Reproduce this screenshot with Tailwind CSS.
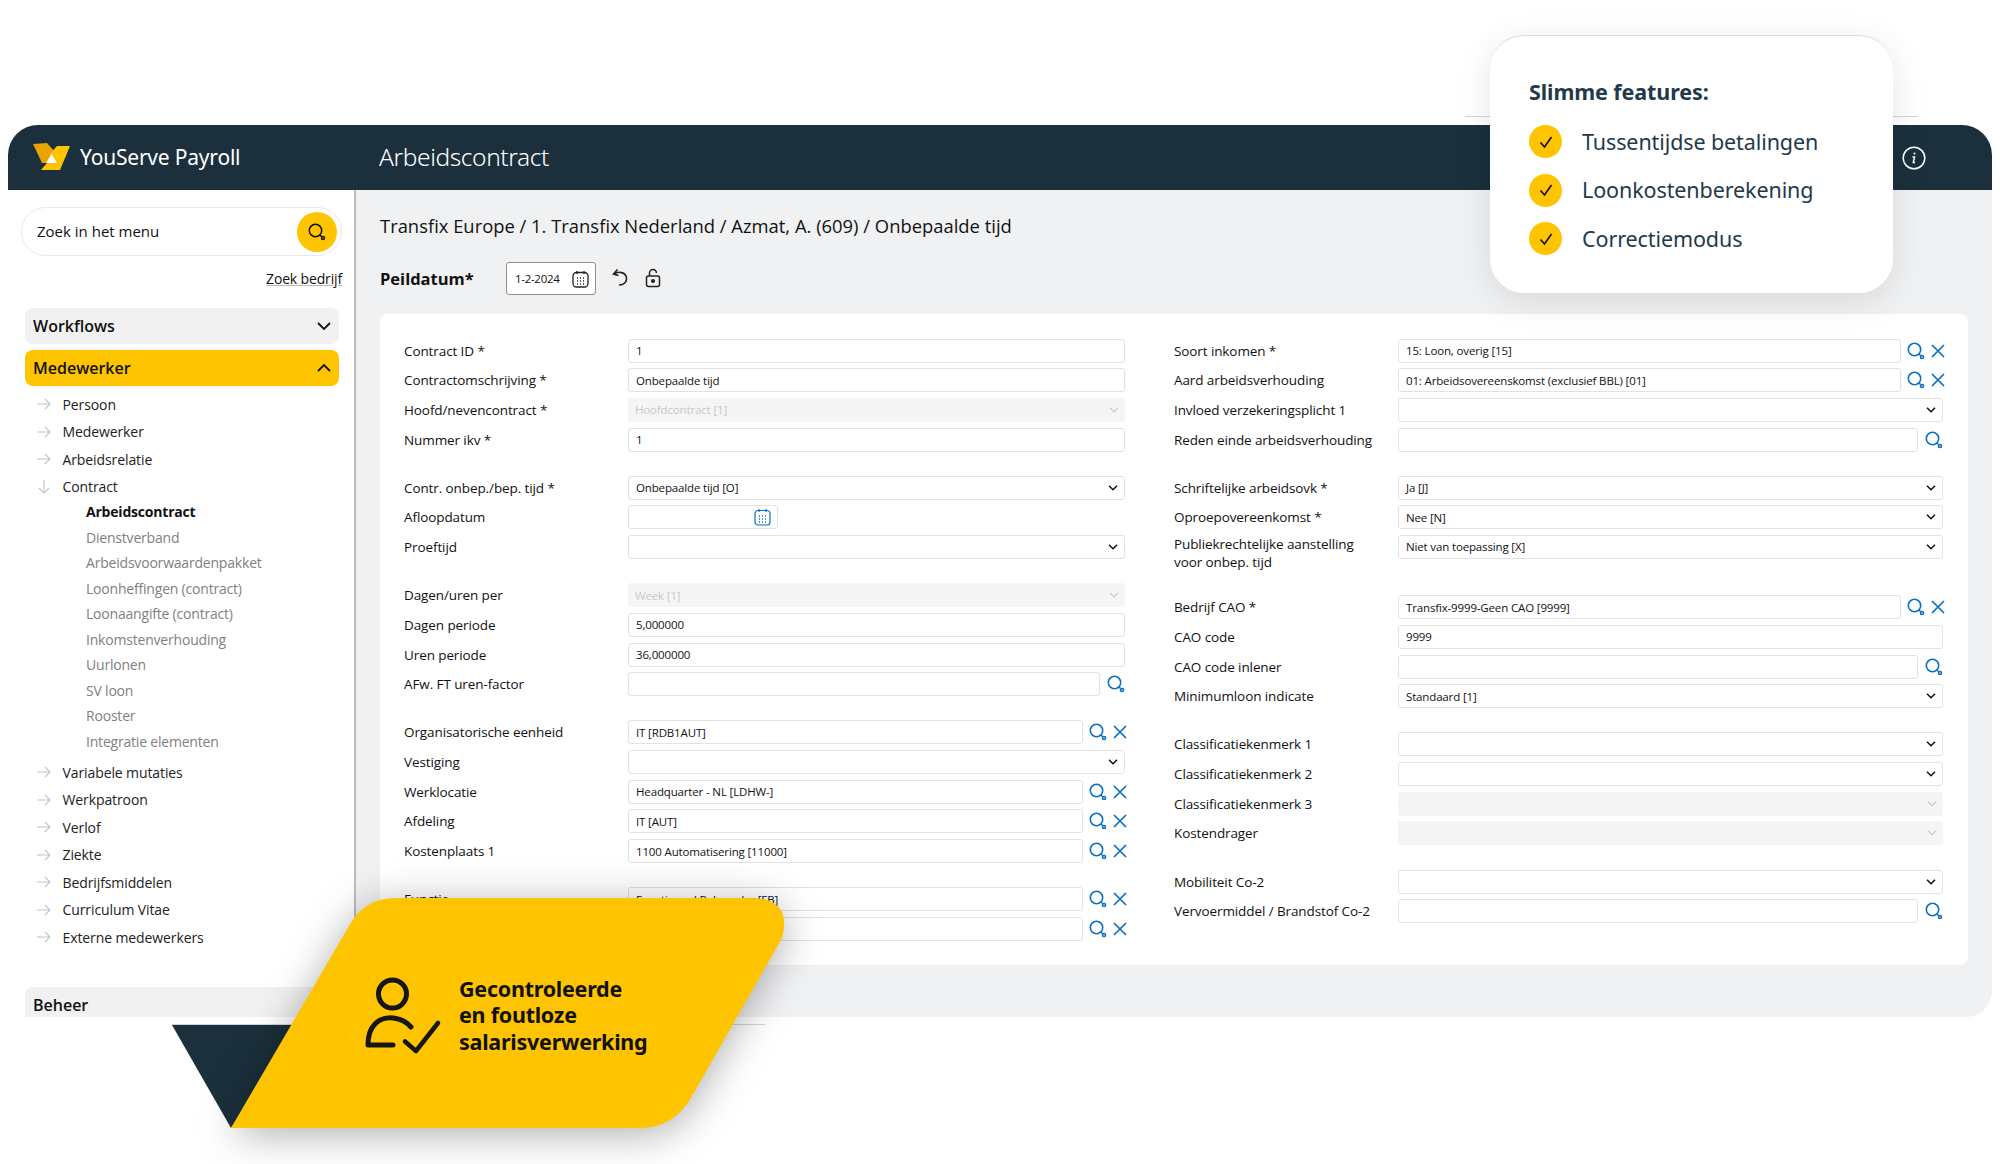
<!DOCTYPE html>
<html lang="en">
<head>
  <meta charset="UTF-8" />
  <title>YouServe Payroll</title>
  <script src="https://cdn.jsdelivr.net/npm/@tailwindcss/browser@4"></script>
</head>
<body class="bg-white font-['Open_Sans',sans-serif] text-[#111]">
<div class="relative w-[2000px] h-[1164px] overflow-hidden bg-white pt-[125px] pl-2">

  <!-- app window -->
  <div class="w-[1984px] h-[892px] rounded-t-[30px] rounded-br-[26px] overflow-hidden flex flex-col">
    <header class="h-[65px] shrink-0 bg-[#1b303c] flex items-center text-white font-['Noto_Sans',sans-serif]">
      <svg class="ml-[25px] w-[38px] h-[30px]" viewBox="0 0 38 30">
        <polygon points="0,1 14,0 22,9 15,20 9,20" fill="#e9a400"/>
        <polygon points="24,3 37,3 27,27 8,27 14,20 22,20 17,11" fill="#fec400"/>
        <polygon points="13,20 18.500,11 24,20" fill="#fff"/>
      </svg>
      <span class="ml-[9px] w-[299px] text-[21px] tracking-[-0.2px] pt-px">YouServe Payroll</span>
      <span class="text-[24.500px] font-light tracking-[-0.4px]">Arbeidscontract</span>
      <svg class="ml-auto mr-[66px] w-6 h-6" viewBox="0 0 24 24" fill="none" stroke="#fff" stroke-width="1.500"><circle cx="12" cy="12" r="10.800"/><circle cx="12.500" cy="7.500" r="1" fill="#fff" stroke="none"/><path d="M10.500 11h2l-1.200 5.500h1.700"/></svg>
    </header>

    <div class="flex flex-1 min-h-0">
      <!-- sidebar -->
      <aside class="w-[348px] shrink-0 bg-white border-r-2 border-[#bdbdbd] overflow-hidden">
        <div class="ml-[13px] mt-[17px] w-[321px] h-[49px] rounded-full border border-[#e8e8e8] flex items-center pl-[15px] pr-1 text-[15px]">
          <span class="flex-1">Zoek in het menu</span>
          <span class="w-10 h-10 rounded-full bg-[#fec400] flex items-center justify-center" id="menu-search"></span>
        </div>
        <div class="mt-[13px] w-[334px] h-[20px] text-right text-[14px] leading-[20px] tracking-[-0.15px] underline decoration-[#bbb]">Zoek bedrijf</div>
        <div class="ml-[17px] mt-[19px] w-[314px] h-9 rounded-[8px] bg-[#f1f1f1] flex items-center justify-between pl-2 pr-[7px] text-[16px] font-semibold">
          Workflows
          <svg class="w-4 h-4" viewBox="0 0 16 16" fill="none" stroke="#111" stroke-width="1.800"><path d="M2 5l6 6 6-6"/></svg>
        </div>
        <div class="ml-[17px] mt-[6px] w-[314px] h-9 rounded-[8px] bg-[#fec400] flex items-center justify-between pl-2 pr-[7px] text-[16px] font-semibold">
          Medewerker
          <svg class="w-4 h-4" viewBox="0 0 16 16" fill="none" stroke="#111" stroke-width="1.800"><path d="M2 11l6-6 6 6"/></svg>
        </div>
        <ul id="nav-top" class="mt-[4.500px]"></ul>
        <ul id="nav-sub" class="-mt-[1.500px]"></ul>
        <ul id="nav-bottom" class="mt-[4.500px]"></ul>
        <div class="ml-[17px] mt-[35.500px] w-[314px] h-[36px] rounded-t-[8px] bg-[#f1f1f1] flex items-center px-2 text-[16px] font-semibold">Beheer</div>
      </aside>

      <!-- main -->
      <main class="flex-1 bg-[#f0f1f3] pl-[24px] pr-6">
        <h2 class="h-[72px] pt-[23px] text-[18.400px] leading-[26px]">Transfix Europe / 1. Transfix Nederland / Azmat, A. (609) / Onbepaalde tijd</h2>
        <div class="h-[52px] flex items-start">
          <span class="mt-[6px] w-[126px] text-[16.500px] font-bold leading-[22px]">Peildatum*</span>
          <div class="w-[90px] h-[33px] rounded-[3px] border border-[#8f8f8f] bg-white flex items-center justify-between pl-2 pr-[6px] text-[11.500px] tracking-[-0.3px]">
            1-2-2024
            <svg class="w-[17px] h-[18px]" viewBox="0 0 17 18" fill="none" stroke="#222" stroke-width="1.300"><rect x="1" y="2.500" width="15" height="14.500" rx="3.500"/><path d="M5 1v3M12 1v3"/><path d="M5 8h1M8 8h1M11 8h1M5 11h1M8 11h1M11 11h1M5 14h1M8 14h1M11 14h1" stroke-width="1.400"/></svg>
          </div>
          <svg class="ml-[14px] mt-[6px] w-[20px] h-[20px]" viewBox="0 0 20 20" fill="none" stroke="#222" stroke-width="1.600"><path d="M4 6C8 3 16 4 16.500 10 17 14 14 17 9 17"/><path d="M7.500 1.500L3.500 6l5 1.500"/></svg>
          <svg class="ml-[14px] mt-[6px] w-[18px] h-[20px]" viewBox="0 0 18 20" fill="none" stroke="#222" stroke-width="1.500"><rect x="2.500" y="8" width="13" height="10.500" rx="2"/><path d="M5.500 8V5a3.500 3.500 0 0 1 7 0"/><circle cx="9" cy="13" r="1.300" fill="#222"/></svg>
        </div>

        <section class="h-[651px] rounded-[8px] bg-white pt-[24.500px] pl-[24px] pr-[25px] flex justify-between text-[13.500px] tracking-[-0.1px]">
          <div id="col-left" class="w-[721px]"></div>
          <div id="col-right" class="w-[769px]"></div>
        </section>
      </main>
    </div>
  </div>

  <!-- faint guide lines from the composition -->
  <div class="absolute left-[1465px] top-[116px] w-[453px] h-px bg-[#d4d4d4]"></div>
  <div class="absolute left-[172px] top-[1024px] w-[593px] h-px bg-[#d4d4d4]"></div>

  <!-- slimme features card -->
  <div class="absolute left-[1490px] top-[35px] w-[403px] h-[258px] rounded-[34px] bg-white border-t border-[#dcdcdc] shadow-[0_8px_36px_rgba(0,0,0,0.10)] pl-[39px] pt-[40px] text-[#1f3a4a] font-['Noto_Sans',sans-serif]">
    <h3 class="h-[32px] text-[21.500px] font-bold leading-[32px] tracking-[-0.1px]">Slimme features:</h3>
    <ul id="features" class="mt-[9.500px]"></ul>
  </div>

  <!-- yellow badge -->
  <svg class="absolute left-0 top-0 w-[2000px] h-[1164px] pointer-events-none" viewBox="0 0 2000 1164">
    <polygon points="172,1025 300,1025 300,1025 231,1128" fill="#1b303c"/>
    <path class="drop-shadow-[0_6px_20px_rgba(0,0,0,0.32)]" d="M231 1128 L349 926 Q364 898 396 898 L750 898 Q793 898 782 938 L692 1096 Q674 1128 640 1128 Z" fill="#fec400"/>
    <g fill="none" stroke="#161616" stroke-width="5" stroke-linecap="round" stroke-linejoin="round">
      <circle cx="392.500" cy="994" r="14"/>
      <path d="M411 1027 C402 1017 385 1014 375 1024 C369 1030 368 1038 368 1045 L393 1045"/>
      <path d="M405 1041.500 L416 1051 L438 1023" stroke-width="4.500"/>
    </g>
  </svg>
  <div class="absolute left-[459px] top-[975.500px] text-[21.500px] font-bold leading-[26.500px] tracking-[-0.25px] text-[#111] font-['Noto_Sans',sans-serif]">Gecontroleerde<br>en foutloze<br>salarisverwerking</div>
</div>

<script>
  const searchIcon = `<svg class="w-[18px] h-[18px] shrink-0" viewBox="0 0 18 18" fill="none" stroke="#0b6fc2" stroke-width="1.600"><circle cx="7.500" cy="7.500" r="6.200"/><path d="M12 12l1.500 1.500"/><circle cx="15" cy="15" r="1.500"/></svg>`;
  const clearIcon = `<svg class="w-[14px] h-[14px] shrink-0" viewBox="0 0 14 14" fill="none" stroke="#0b6fc2" stroke-width="1.700"><path d="M1 1l12 12M13 1L1 13"/></svg>`;
  const arrow = `<svg class="w-[14px] h-[12px]" viewBox="0 0 14 12" fill="none" stroke="#c4c4c4" stroke-width="1.100"><path d="M0 6h13M8 1l5 5-5 5"/></svg>`;
  const arrowDown = `<svg class="w-[14px] h-[14px]" viewBox="0 0 14 14" fill="none" stroke="#c4c4c4" stroke-width="1.100"><path d="M7 0v13M2 8l5 5 5-5"/></svg>`;
  const check = `<svg class="w-[14px] h-[14px]" viewBox="0 0 14 14" fill="none" stroke="#111" stroke-width="1.700"><path d="M1.500 7.500L5.500 12 12.500 2"/></svg>`;

  document.getElementById("menu-search").innerHTML = `<svg class="w-[18px] h-[18px]" viewBox="0 0 18 18" fill="none" stroke="#111" stroke-width="1.500"><circle cx="7.500" cy="7.500" r="6.200"/><path d="M12 12l1.500 1.500"/><circle cx="15" cy="15" r="1.500"/></svg>`;

  const navItem = (label, icon) => `<li class="h-[27.500px] flex items-center pl-[29px] text-[14px] tracking-[-0.1px] text-[#222]"><span class="w-[25.500px] flex">${icon}</span>${label}</li>`;
  document.getElementById("nav-top").innerHTML = ["Persoon", "Medewerker", "Arbeidsrelatie"].map(l => navItem(l, arrow)).join("") + navItem("Contract", arrowDown);
  document.getElementById("nav-bottom").innerHTML = ["Variabele mutaties", "Werkpatroon", "Verlof", "Ziekte", "Bedrijfsmiddelen", "Curriculum Vitae", "Externe medewerkers"].map(l => navItem(l, arrow)).join("");
  document.getElementById("nav-sub").innerHTML = ["Arbeidscontract", "Dienstverband", "Arbeidsvoorwaardenpakket", "Loonheffingen (contract)", "Loonaangifte (contract)", "Inkomstenverhouding", "Uurlonen", "SV loon", "Rooster", "Integratie elementen"]
    .map((l, i) => `<li class="h-[25.500px] flex items-center pl-[78px] text-[14px] tracking-[-0.2px] ${i === 0 ? "font-bold text-[#111]" : "text-[#808080]"}">${l}</li>`).join("");

  document.getElementById("features").innerHTML = ["Tussentijdse betalingen", "Loonkostenberekening", "Correctiemodus"]
    .map(l => `<li class="h-[48.500px] flex items-center text-[21.500px] tracking-[-0.1px]"><span class="w-[33px] h-[33px] rounded-full bg-[#fec400] flex items-center justify-center mr-5">${check}</span>${l}</li>`).join("");

  const chevron = (color) => `<svg class="ml-auto w-[10px] h-[6px] shrink-0" viewBox="0 0 10 6" fill="none" stroke="${color}" stroke-width="1.500"><path d="M1 .8l4 4 4-4"/></svg>`;
  const boxBase = "flex-1 h-6 rounded-[3px] flex items-center pl-[7px] pr-[6px] text-[11.500px] tracking-[-0.15px] whitespace-nowrap overflow-hidden";

  function control(kind, value) {
    const on = "border-[1.500px] border-[#e2e2e2] bg-white";
    if (kind === "text") return `<div class="${boxBase} ${on}">${value}</div>`;
    if (kind === "select") return `<div class="${boxBase} ${on}">${value}${chevron("#111")}</div>`;
    if (kind === "off") return `<div class="${boxBase} bg-[#f5f5f5] text-[#c8c8c8]">${value}${chevron("#cfcfcf")}</div>`;
    if (kind === "date") return `<div class="w-[150px] h-6 rounded-[3px] border-[1.500px] border-[#e2e2e2] bg-white flex items-center justify-end pr-[6px]"><svg class="w-[17px] h-[18px]" viewBox="0 0 17 18" fill="none" stroke="#0b6fc2" stroke-width="1.200"><rect x="1" y="2.500" width="15" height="14.500" rx="3"/><path d="M5 1v3M12 1v3"/><path d="M5 8h1M8 8h1M11 8h1M5 11h1M8 11h1M11 11h1M5 14h1M8 14h1M11 14h1" stroke-width="1.400"/></svg></div>`;
    if (kind === "search") return `<div class="${boxBase} ${on}">${value}</div><div class="w-[25px] flex justify-end">${searchIcon}</div>`;
    if (kind === "both") return `<div class="${boxBase} ${on}">${value}</div><div class="w-[44px] flex items-center justify-end gap-[6px] -mr-[2px]">${searchIcon}${clearIcon}</div>`;
    return "";
  }

  const row = ([label, kind, value = ""]) => {
    const labelClass = label.includes("<br>") ? "w-[224px] shrink-0 self-start leading-[18px]" : "w-[224px] shrink-0 leading-[16px]";
    return `<div class="h-6 mb-[5.680px] flex items-center"><label class="${labelClass}">${label}</label>${control(kind, value)}</div>`;
  };
  const group = (rows) => `<div class="mb-[24.200px]">${rows.map(row).join("")}</div>`;

  document.getElementById("col-left").innerHTML = [
    [["Contract ID *", "text", "1"], ["Contractomschrijving *", "text", "Onbepaalde tijd"], ["Hoofd/nevencontract *", "off", "Hoofdcontract [1]"], ["Nummer ikv *", "text", "1"]],
    [["Contr. onbep./bep. tijd *", "select", "Onbepaalde tijd [O]"], ["Afloopdatum", "date"], ["Proeftijd", "select"]],
    [["Dagen/uren per", "off", "Week [1]"], ["Dagen periode", "text", "5,000000"], ["Uren periode", "text", "36,000000"], ["AFw. FT uren-factor", "search"]],
    [["Organisatorische eenheid", "both", "IT [RDB1AUT]"], ["Vestiging", "select"], ["Werklocatie", "both", "Headquarter - NL [LDHW-]"], ["Afdeling", "both", "IT [AUT]"], ["Kostenplaats 1", "both", "1100 Automatisering [11000]"]],
    [["Functie", "both", "Functioneel Beheerder [FB]"], ["", "both"]],
  ].map(group).join("");

  document.getElementById("col-right").innerHTML = [
    [["Soort inkomen *", "both", "15: Loon, overig [15]"], ["Aard arbeidsverhouding", "both", "01: Arbeidsovereenskomst (exclusief BBL) [01]"], ["Invloed verzekeringsplicht 1", "select"], ["Reden einde arbeidsverhouding", "search"]],
    [["Schriftelijke arbeidsovk *", "select", "Ja [J]"], ["Oproepovereenkomst *", "select", "Nee [N]"], ["Publiekrechtelijke aanstelling<br>voor onbep. tijd", "select", "Niet van toepassing [X]"]],
    [],
    [["Bedrijf CAO *", "both", "Transfix-9999-Geen CAO [9999]"], ["CAO code", "text", "9999"], ["CAO code inlener", "search"], ["Minimumloon indicate", "select", "Standaard [1]"]],
    [["Classificatiekenmerk 1", "select"], ["Classificatiekenmerk 2", "select"], ["Classificatiekenmerk 3", "off"], ["Kostendrager", "off"]],
    [["Mobiliteit Co-2", "select"], ["Vervoermiddel / Brandstof Co-2", "search"]],
  ].map((rows) => rows.length ? group(rows) : `<div class="h-[12px]"></div>`).join("");
</script>
</body>
</html>
